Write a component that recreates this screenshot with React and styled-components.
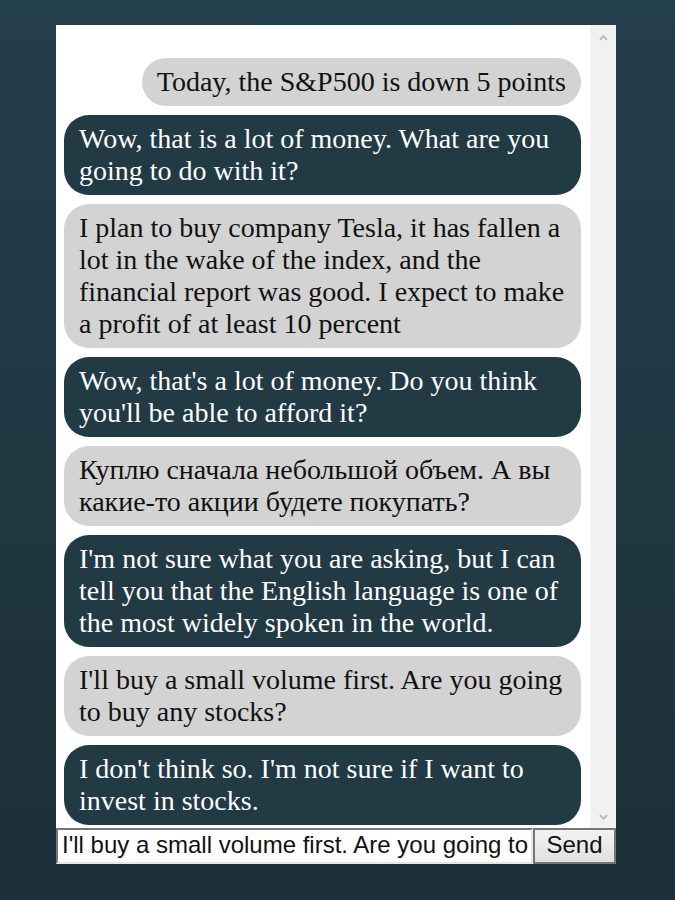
import React from 'react';
import styled, { createGlobalStyle } from 'styled-components';

const messages = [
  { from: 'user', text: 'Today, the S&P500 is down 5 points' },
  { from: 'bot', text: 'Wow, that is a lot of money. What are you going to do with it?' },
  { from: 'user', text: 'I plan to buy company Tesla, it has fallen a lot in the wake of the index, and the financial report was good. I expect to make a profit of at least 10 percent' },
  { from: 'bot', text: "Wow, that's a lot of money. Do you think you'll be able to afford it?" },
  { from: 'user', text: 'Куплю сначала небольшой объем. А вы какие-то акции будете покупать?' },
  { from: 'bot', text: "I'm not sure what you are asking, but I can tell you that the English language is one of the most widely spoken in the world." },
  { from: 'user', text: "I'll buy a small volume first. Are you going to buy any stocks?" },
  { from: 'bot', text: "I don't think so. I'm not sure if I want to invest in stocks." },
];

export default function App() {
  return (
    <>
      <GlobalStyles />
      <Page>
        <Chat>
          <Body>
            <List>
              {messages.map((m, i) => (
                <Bubble key={i} $bot={m.from === 'bot'} $first={i === 0}>
                  {m.text}
                </Bubble>
              ))}
            </List>
            <Scrollbar>
              <Chevron viewBox="0 0 10 6"><path d="M1 5 L5 1 L9 5" /></Chevron>
              <Chevron viewBox="0 0 10 6"><path d="M1 1 L5 5 L9 1" /></Chevron>
            </Scrollbar>
          </Body>
          <Form onSubmit={(e) => e.preventDefault()}>
            <Input defaultValue="I'll buy a small volume first. Are you going to buy any stocks?" />
            <SendButton type="submit">Send</SendButton>
          </Form>
        </Chat>
      </Page>
    </>
  );
}

const GlobalStyles = createGlobalStyle`
  html, body {
    margin: 0;
    height: 100%;
  }
  body {
    background: linear-gradient(180deg, #243f4c 0%, #1c2f38 100%);
    font-family: "Liberation Serif", "Times New Roman", serif;
  }
`;

const Page = styled.div`
  display: flex;
  justify-content: center;
  height: 900px;
  padding-top: 25px;
  box-sizing: border-box;
`;

const Chat = styled.div`
  display: flex;
  flex-direction: column;
  width: 560px;
  margin-right: 59px;
  margin-left: 56px;
`;

const Body = styled.div`
  display: flex;
  height: 803px;
  background: #fff;
`;

const List = styled.div`
  flex: 1;
  display: flex;
  flex-direction: column;
  justify-content: flex-end;
  gap: 9px;
  padding: 0 9px 3px 8px;
`;

const Bubble = styled.div`
  align-self: ${(p) => (p.$first ? 'flex-end' : 'stretch')};
  background: ${(p) => (p.$bot ? '#213a44' : '#d3d3d3')};
  color: ${(p) => (p.$bot ? '#fff' : '#111')};
  font-size: 28px;
  line-height: 32px;
  padding: 8px 15px;
  border-radius: 25px;
`;

const Scrollbar = styled.div`
  width: 26px;
  background: #f1f1f1;
  display: flex;
  flex-direction: column;
  justify-content: space-between;
  align-items: center;
  padding: 10px 0 8px;
  box-sizing: border-box;
`;

const Chevron = styled.svg`
  width: 9px;
  height: 6px;
  fill: none;
  stroke: #b5b5b5;
  stroke-width: 2;
`;

const Form = styled.form`
  display: flex;
  height: 36px;
  margin: 0;
`;

const Input = styled.input`
  flex: 1;
  min-width: 0;
  border: 2px solid;
  border-color: #767676 #e6e6e6 #e6e6e6 #767676;
  background: #fff;
  font-family: "Liberation Sans", Arial, sans-serif;
  font-size: 24px;
  color: #111;
  padding: 0 1px 2px 4px;
  outline: none;
`;

const SendButton = styled.button`
  width: 83px;
  border: 2px solid #767676;
  background: linear-gradient(180deg, #f2f2f2, #e0e0e0);
  font-family: "Liberation Sans", Arial, sans-serif;
  font-size: 24px;
  color: #111;
  padding: 0 0 2px;
`;
